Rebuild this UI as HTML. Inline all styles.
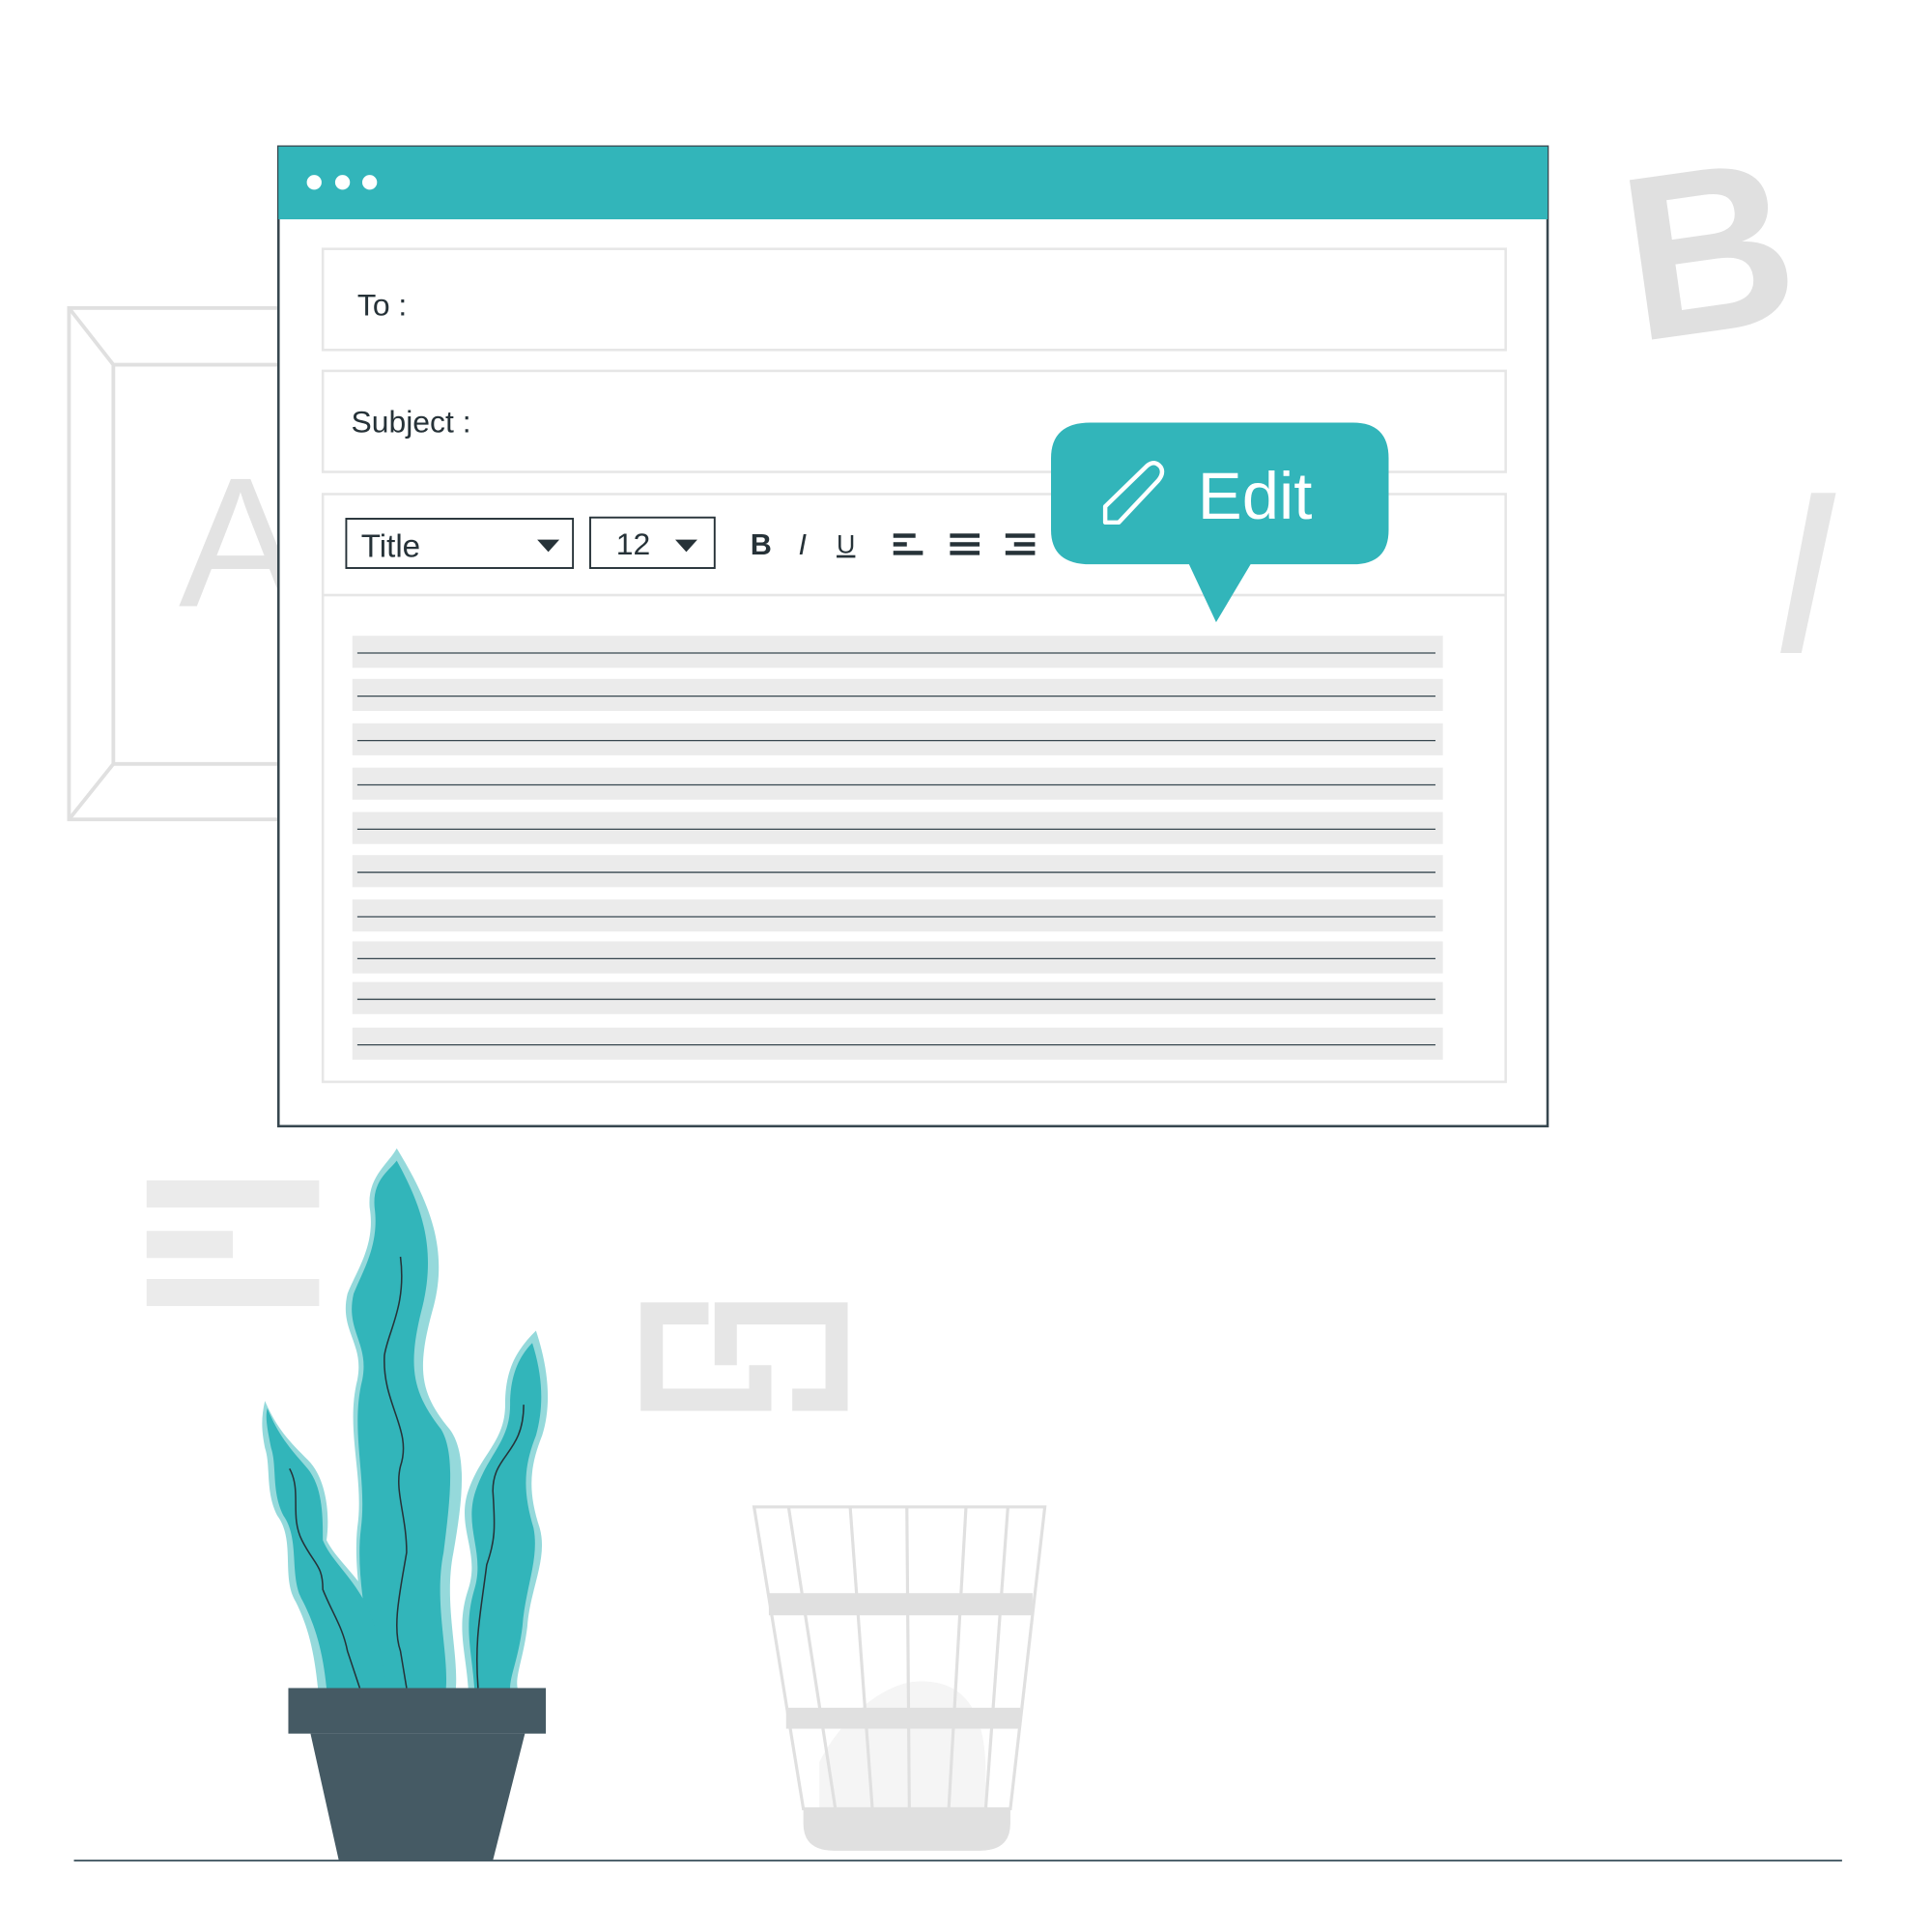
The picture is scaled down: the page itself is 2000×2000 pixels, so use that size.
<!DOCTYPE html>
<html><head><meta charset="utf-8"><style>
html,body{margin:0;padding:0;background:#fff;width:2000px;height:2000px;overflow:hidden}
svg{display:block}
text{font-family:"Liberation Sans",sans-serif}
</style></head><body>
<svg width="2000" height="2000" viewBox="0 0 1568 1568" xmlns="http://www.w3.org/2000/svg">
<!-- background A frame -->
<g fill="none" stroke="#e0e0e0" stroke-width="3">
<rect x="56" y="250" width="180" height="415"/>
<path d="M92 296 H236 M92 296 V620 H236 M56 250 L92 296 M56 665 L92 620"/>
</g>
<text x="145" y="492" font-family="Liberation Serif" font-size="150" fill="#e3e3e3">A</text>
<!-- big B -->
<text x="1318" y="268" font-size="190" font-weight="bold" fill="#e0e0e0" transform="rotate(-8 1390 200)">B</text>
<polygon points="1470,400 1490,400 1462,530 1445,530" fill="#e6e6e6"/>
<!-- left lines -->
<rect x="119" y="958" width="140" height="22" fill="#ebebeb"/>
<rect x="119" y="999" width="70" height="22" fill="#ebebeb"/>
<rect x="119" y="1038" width="140" height="22" fill="#ebebeb"/>
<!-- link icon -->
<path d="M575 1057 H520 V1145 H626 V1108 H608 V1127 H538 V1075 H575Z" fill="#e6e6e6"/>
<path d="M580 1057 H688 V1145 H643 V1127 H670 V1075 H598 V1108 H580Z" fill="#e6e6e6"/>
<!-- window -->
<rect x="226" y="119" width="1030" height="795" fill="#fff" stroke="#37474f" stroke-width="2"/>
<rect x="226" y="119" width="1030" height="59" fill="#32b5ba"/>
<circle cx="255" cy="148" r="6" fill="#fff"/><circle cx="278" cy="148" r="6" fill="#fff"/><circle cx="300" cy="148" r="6" fill="#fff"/>
<g fill="#fff" stroke="#e6e6e6" stroke-width="2">
<rect x="262" y="202" width="960" height="82"/>
<rect x="262" y="301" width="960" height="82"/>
<rect x="262" y="401" width="960" height="477"/>
</g>
<line x1="262" y1="483" x2="1222" y2="483" stroke="#e6e6e6" stroke-width="2"/>
<text x="290" y="256" font-size="25" fill="#263238">To :</text>
<text x="285" y="351" font-size="25" fill="#263238">Subject :</text>
<rect x="281" y="421" width="184" height="40" fill="#fff" stroke="#263238" stroke-width="1.5"/>
<text x="293" y="452" font-size="26" fill="#263238">Title</text>
<polygon points="436,438 454,438 445,448" fill="#263238"/>
<rect x="479" y="420" width="101" height="41" fill="#fff" stroke="#263238" stroke-width="1.5"/>
<text x="500" y="450" font-size="25" fill="#263238">12</text>
<polygon points="548,438 566,438 557,448" fill="#263238"/>
<text x="609" y="450" font-size="24" font-weight="bold" fill="#263238">B</text>
<text x="648" y="450" font-size="24" font-style="italic" fill="#263238">I</text>
<text x="679" y="449" font-size="21" fill="#263238" text-decoration="underline">U</text>
<g fill="#263238">
<rect x="725" y="433" width="18" height="3.5"/><rect x="725" y="440" width="11" height="3.5"/><rect x="725" y="447" width="24" height="3.5"/>
<rect x="771" y="433" width="24" height="3.5"/><rect x="771" y="440" width="24" height="3.5"/><rect x="771" y="447" width="24" height="3.5"/>
<rect x="816" y="433" width="24" height="3.5"/><rect x="823" y="440" width="17" height="3.5"/><rect x="816" y="447" width="24" height="3.5"/>
</g>
<g>
<rect x="286" y="516" width="885" height="26" fill="#ebebeb"/>
<rect x="286" y="551" width="885" height="26" fill="#ebebeb"/>
<rect x="286" y="587" width="885" height="26" fill="#ebebeb"/>
<rect x="286" y="623" width="885" height="26" fill="#ebebeb"/>
<rect x="286" y="659" width="885" height="26" fill="#ebebeb"/>
<rect x="286" y="694" width="885" height="26" fill="#ebebeb"/>
<rect x="286" y="730" width="885" height="26" fill="#ebebeb"/>
<rect x="286" y="764" width="885" height="26" fill="#ebebeb"/>
<rect x="286" y="797" width="885" height="26" fill="#ebebeb"/>
<rect x="286" y="834" width="885" height="26" fill="#ebebeb"/>
</g>
<g stroke="#37474f" stroke-width="1">
<line x1="290" y1="530" x2="1165" y2="530"/><line x1="290" y1="565" x2="1165" y2="565"/>
<line x1="290" y1="601" x2="1165" y2="601"/><line x1="290" y1="637" x2="1165" y2="637"/>
<line x1="290" y1="673" x2="1165" y2="673"/><line x1="290" y1="708" x2="1165" y2="708"/>
<line x1="290" y1="744" x2="1165" y2="744"/><line x1="290" y1="778" x2="1165" y2="778"/>
<line x1="290" y1="811" x2="1165" y2="811"/><line x1="290" y1="848" x2="1165" y2="848"/>
</g>
<!-- edit bubble -->
<path d="M885 343 H1098 Q1127 343 1127 372 V430 Q1127 458 1098 458 H1015 L987 505 L965 458 H885 Q853 458 853 430 V372 Q853 343 885 343Z" fill="#32b5ba"/>
<path d="M897 424 V411 L931 378 Q937 373 942 379 Q945 384 940 390 L908 424Z" fill="none" stroke="#fff" stroke-width="3.5" stroke-linejoin="round"/>
<text x="972" y="421" font-size="54" fill="#fff">Edit</text>
<!-- plant -->
<g fill="#95d9db">
<path d="M322 932 C345 970 365 1010 352 1060 C338 1110 340 1130 365 1160 C380 1180 375 1220 368 1260 C360 1300 372 1340 370 1370 H300 C298 1320 286 1280 290 1240 C296 1200 280 1160 290 1120 C296 1090 275 1080 282 1050 C290 1030 305 1010 300 980 C298 955 315 945 322 932Z"/>
<path d="M215 1137 C225 1160 235 1170 250 1185 C265 1200 268 1230 265 1250 C275 1270 300 1285 310 1320 C318 1345 318 1360 320 1370 H258 C255 1340 250 1320 240 1300 C228 1280 240 1250 225 1230 C215 1210 220 1190 215 1175 C212 1160 212 1150 215 1137Z"/>
<path d="M435 1080 C445 1110 448 1140 440 1165 C430 1190 428 1210 438 1240 C445 1265 430 1290 428 1320 C425 1345 418 1360 420 1370 H380 C378 1340 370 1320 380 1290 C390 1260 370 1240 380 1210 C390 1180 410 1170 410 1140 C410 1110 420 1095 435 1080Z"/>
</g>
<g fill="#32b5ba">
<path d="M322 942 C340 975 355 1010 343 1060 C330 1110 335 1130 358 1160 C370 1180 365 1220 360 1260 C352 1300 364 1340 362 1370 H302 C300 1320 288 1280 293 1240 C298 1200 284 1160 294 1120 C300 1090 280 1080 287 1050 C295 1030 308 1010 304 980 C302 958 316 950 322 942Z"/>
<path d="M217 1143 C226 1165 235 1175 248 1190 C262 1205 262 1230 262 1250 C270 1270 294 1285 304 1320 C310 1345 312 1360 314 1370 H265 C262 1340 256 1320 246 1300 C234 1280 244 1250 230 1230 C220 1210 225 1190 220 1175 C217 1160 215 1150 217 1143Z"/>
<path d="M432 1090 C440 1115 442 1140 435 1165 C425 1190 424 1210 433 1240 C438 1265 426 1290 424 1320 C421 1345 414 1360 414 1370 H385 C383 1340 376 1320 385 1290 C394 1260 376 1240 386 1210 C396 1180 414 1170 414 1140 C414 1115 422 1100 432 1090Z"/>
</g>
<g fill="none" stroke="#263238" stroke-width="1.2">
<path d="M325 1020 C330 1060 315 1080 312 1100 C310 1140 335 1160 325 1190 C320 1210 330 1230 330 1260 C325 1290 318 1320 325 1340 L330 1370"/>
<path d="M235 1192 C245 1210 235 1230 245 1250 C255 1270 262 1270 262 1290 C270 1310 278 1320 282 1340 L292 1370"/>
<path d="M425 1140 C425 1180 400 1180 400 1210 C402 1240 402 1250 395 1270 C390 1310 385 1330 388 1370"/>
</g>
<!-- pot -->
<rect x="234" y="1370" width="209" height="37" fill="#455a64"/>
<polygon points="252,1407 426,1407 400,1510 275,1510" fill="#455a64"/>
<!-- basket -->
<path d="M665 1430 C680 1400 710 1370 740 1365 C790 1360 800 1400 800 1440 L800 1470 H665Z" fill="#f5f5f5"/>
<path d="M652 1468 H820 V1480 Q820 1502 795 1502 H677 Q652 1502 652 1480Z" fill="#e0e0e0"/>
<g fill="none" stroke="#e0e0e0" stroke-width="2.5">
<path d="M612 1223 H848 L820 1468 H652Z"/>
<path d="M640 1223 L678 1468 M690 1223 L708 1468 M736 1223 L738 1468 M784 1223 L770 1468 M818 1223 L800 1468"/>
</g>
<rect x="624" y="1293" width="214" height="18" fill="#e0e0e0"/>
<rect x="638" y="1386" width="190" height="17" fill="#e0e0e0"/>
<line x1="60" y1="1510" x2="1495" y2="1510" stroke="#455a64" stroke-width="1.5"/>
</svg>
</body></html>
